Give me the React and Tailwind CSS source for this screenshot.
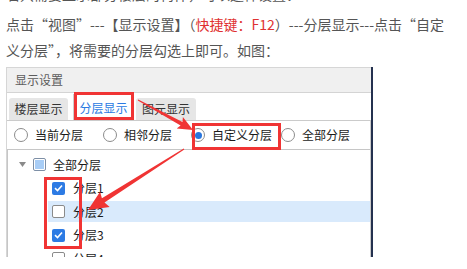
import React from 'react';

// tapered annotation arrow: thin at the tail, wide head at the tip
function arrowPoints(tail, tip, w0, w1, headLen, headHalf) {
  const dx = tip[0] - tail[0];
  const dy = tip[1] - tail[1];
  const len = Math.hypot(dx, dy);
  const ux = dx / len;
  const uy = dy / len;
  const nx = -uy;
  const ny = ux;
  const bx = tip[0] - ux * headLen;
  const by = tip[1] - uy * headLen;
  const pts = [
    [tail[0] + nx * w0 / 2, tail[1] + ny * w0 / 2],
    [bx + nx * w1 / 2, by + ny * w1 / 2],
    [bx + nx * headHalf - ux * 2, by + ny * headHalf - uy * 2],
    tip,
    [bx - nx * headHalf - ux * 2, by - ny * headHalf - uy * 2],
    [bx - nx * w1 / 2, by - ny * w1 / 2],
    [tail[0] - nx * w0 / 2, tail[1] - ny * w0 / 2],
  ];
  return pts.map((p) => p.map((v) => v.toFixed(1)).join(',')).join(' ');
}

function Radio({ checked, label, className }) {
  return (
    <div className={`flex items-center ${className}`}>
      <span className="w-[14px] h-[14px] rounded-full border border-[#8c8c8c] bg-white flex items-center justify-center shrink-0">
        {checked && <span className="w-[7px] h-[7px] rounded-full bg-[#2a76dd]" />}
      </span>
      <span className="ml-[7px] text-[12px] text-[#1a1a1a] leading-none">{label}</span>
    </div>
  );
}

function Checkbox({ state, className = '' }) {
  if (state === 'checked') {
    return (
      <span className={`w-[13px] h-[13px] rounded-[2px] bg-[#2d7be4] flex items-center justify-center shrink-0 ${className}`}>
        <svg width="9" height="8" viewBox="0 0 9 8">
          <path d="M1 4.2 L3.5 6.5 L8 1.5" fill="none" stroke="#fff" strokeWidth="1.6" />
        </svg>
      </span>
    );
  }
  if (state === 'partial') {
    return (
      <span className={`block w-[13px] h-[13px] rounded-[2px] border border-[#7d8fa6] bg-white p-[1px] shrink-0 ${className}`}>
        <span className="block w-full h-full bg-[#a8cdf6]" />
      </span>
    );
  }
  return <span className={`block w-[13px] h-[13px] rounded-[2px] border border-[#8a8a8a] bg-white shrink-0 ${className}`} />;
}

const layers = [
  { name: '分层1', state: 'checked' },
  { name: '分层2', state: 'empty', hl: true },
  { name: '分层3', state: 'checked' },
  { name: '分层4', state: 'empty' },
];

export default function App() {
  return (
    <div className="relative w-[467px] h-[269px] overflow-hidden bg-white font-['Noto_Sans_CJK_SC',sans-serif]">
      {/* Article text */}
      <div className="-mt-[19px] px-[6px] text-[14px] leading-[26px] text-[#555] whitespace-nowrap">
        <p className="h-[30px]">若只需要显示部分楼层的构件，可以这样设置：</p>
        <p>
          点击“视图”---【显示设置】（<span className="text-[#e03131]">快捷键：F12</span>）---分层显示---点击“自定
        </p>
        <p>义分层”，将需要的分层勾选上即可。如图：</p>
      </div>

      {/* Screenshot of the dialog */}
      <div className="mt-[4px] ml-[6px] w-[367px] h-[190px] flex">
        <div className="w-[365px] flex flex-col border-l border-t border-[#d6d6d6]">
          <div className="h-[25px] bg-[#f0f0f0] border-b border-[#d4d4d4] flex items-center pl-[8px] text-[12px] text-[#5c5c5c]">
            显示设置
          </div>
          <div className="h-[27px] flex items-end pl-[2px] bg-white">
            <div className="w-[59px] h-[22px] rounded-t-[3px] bg-[#e6e6e6] flex items-center justify-center text-[12px] text-[#333]">
              楼层显示
            </div>
            <div className="ml-[5px] w-[61px] h-[26px] bg-white border border-b-0 border-[#cdcdcd] flex items-center justify-center text-[12px] text-[#2a7ae2]">
              分层显示
            </div>
            <div className="ml-[2px] w-[60px] h-[22px] rounded-t-[3px] bg-[#e6e6e6] flex items-center justify-center text-[12px] text-[#333]">
              图元显示
            </div>
          </div>
          <div className="flex-1 flex flex-col border-t border-r border-[#cbcbcb] min-h-0">
            <div className="h-[28px] flex items-center">
              <Radio label="当前分层" className="ml-[7px]" />
              <Radio label="相邻分层" className="ml-[20px]" />
              <Radio label="自定义分层" checked className="ml-[19px]" />
              <Radio label="全部分层" className="ml-[9px]" />
            </div>
            <div className="flex-1 border-t border-l border-[#c6c6c6] pt-[3px] overflow-hidden">
              <div className="h-[23.5px] flex items-center">
                <svg className="ml-[11px] shrink-0" width="7" height="5" viewBox="0 0 7 5">
                  <path d="M0 0 H7 L3.5 5 Z" fill="#8a8a8a" />
                </svg>
                <Checkbox state="partial" className="ml-[7px]" />
                <span className="ml-[7px] text-[12px] text-[#1a1a1a]">全部分层</span>
              </div>
              {layers.map((l) => (
                <div key={l.name} className="h-[23.5px] flex items-center">
                  <div className={`ml-[40px] flex-1 h-[21px] flex items-center pl-[4px] ${l.hl ? 'bg-[#d9eafc]' : ''}`}>
                    <Checkbox state={l.state} />
                    <span className="ml-[8px] text-[12px] text-[#1a1a1a]">{l.name}</span>
                  </div>
                </div>
              ))}
            </div>
          </div>
        </div>
        <div className="w-[2px] bg-[#24314f]" />
      </div>

      {/* Red annotations */}
      <svg className="absolute left-0 top-0 pointer-events-none" width="467" height="269" viewBox="0 0 467 269">
        <g fill="none" stroke="#f03434" strokeWidth="3">
          <rect x="75.5" y="93.5" width="57" height="25" />
          <rect x="193.5" y="124.5" width="86" height="24" />
          <rect x="45.5" y="178.5" width="35" height="69" />
        </g>
        <polygon fill="#f03434" points={arrowPoints([138, 100], [193, 130], 1, 4, 13, 6.5)} />
        <polygon fill="#f03434" points={arrowPoints([184, 149], [88, 210], 1, 5, 18, 9)} />
      </svg>
    </div>
  );
}
